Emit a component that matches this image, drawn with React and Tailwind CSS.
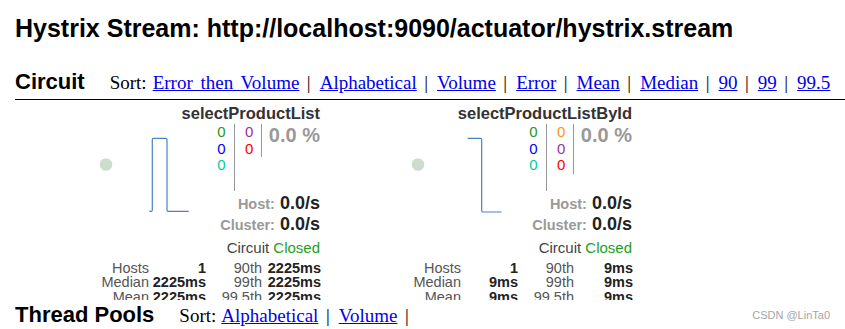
import React from 'react';

const sans = { fontFamily: '"Liberation Sans", Arial, sans-serif' };
const serif = { fontFamily: '"Liberation Serif", "Times New Roman", serif' };

const circuits = [
  {
    name: 'selectProductList',
    col1: [['0', 'text-[#229922]'], ['0', 'text-[#0000ff]'], ['0', 'text-[#00cc99]']],
    col2: [['0', 'text-[#993399]'], ['0', 'text-[#ff0000]']],
    spark: 'M139.3 87.3 L141.3 87.3 Q142.3 87.3 142.3 86 L142.3 15.6 Q142.3 14.3 143.6 14.3 L155.6 14.3 Q157 14.3 157 15.6 L157 86 Q157 87.3 158.3 87.3 L178.7 87.3',
    hosts: '1',
    median: '2225ms',
    mean: '2225ms',
    p90: '2225ms',
    p99: '2225ms',
    p995: '2225ms',
  },
  {
    name: 'selectProductListById',
    col1: [['0', 'text-[#229922]'], ['0', 'text-[#0000ff]'], ['0', 'text-[#00cc99]']],
    col2: [['0', 'text-[#ff9900]'], ['0', 'text-[#993399]'], ['0', 'text-[#ff0000]']],
    spark: 'M145.7 14.3 L158.4 14.3 Q159.7 14.3 159.7 15.6 L159.7 86.7 Q159.7 88 161 88 L179.7 88',
    hosts: '1',
    median: '9ms',
    mean: '9ms',
    p90: '9ms',
    p99: '9ms',
    p995: '9ms',
  },
];

const Sep = () => <span className="pl-[7.5px] pr-[9px] text-black">|</span>;

const Link = ({ children }) => (
  <a href="#" className="text-[#0000ee] underline">
    {children}
  </a>
);

const CircuitCard = ({ c }) => (
  <div className="w-[312px] h-[200px] overflow-hidden flex flex-col pt-[4px]" style={sans}>
    <div className="text-right pr-[2px] text-[16.5px] leading-[18px] font-bold text-[#333]">{c.name}</div>
    <div className="flex mt-[2px]">
      <svg width="190" height="135" className="shrink-0">
        <circle cx="96" cy="40.5" r="6.3" fill="#cddccd" />
        <path d={c.spark} fill="none" stroke="#4a83c4" strokeWidth="1.2" />
      </svg>
      <div className="flex-1 flex flex-col items-end pr-[2px]">
        <div className="flex items-start text-[15px] leading-[16.7px]">
          <div className="h-[67px] pr-[8px] border-r border-[#999] flex flex-col">
            {c.col1.map(([v, cls], i) => (
              <span key={i} className={cls}>{v}</span>
            ))}
          </div>
          <div className="pl-[10.5px] pr-[8px] border-r border-[#999] flex flex-col">
            {c.col2.map(([v, cls], i) => (
              <span key={i} className={cls}>{v}</span>
            ))}
          </div>
          <div className="pl-[6.5px] text-[20px] leading-[22px] font-bold text-[#999]">0.0 %</div>
        </div>
        <div className="mt-[2px] text-[18px] leading-[21px] font-bold text-[#222]">
          <span className="text-[14.5px] leading-[14px] text-[#999]">Host:</span>
          <span className="ml-[5px]">0.0/s</span>
        </div>
        <div className="text-[18px] leading-[21px] font-bold text-[#222]">
          <span className="text-[14.5px] leading-[14px] text-[#999]">Cluster:</span>
          <span className="ml-[5px]">0.0/s</span>
        </div>
        <div className="mt-[2px] text-[15px] leading-[22px] text-[#444]">
          Circuit <span className="text-[#22a022]">Closed</span>
        </div>
      </div>
    </div>
    <div className="grid grid-cols-[139px_57px_56px_59px] text-right text-[14.5px] leading-[14.4px] mt-[2px]">
      <div className="text-[#555]">Hosts</div>
      <div className="font-bold text-[#222]">{c.hosts}</div>
      <div className="text-[#555]">90th</div>
      <div className="font-bold text-[#222]">{c.p90}</div>
      <div className="text-[#555]">Median</div>
      <div className="font-bold text-[#222]">{c.median}</div>
      <div className="text-[#555]">99th</div>
      <div className="font-bold text-[#222]">{c.p99}</div>
      <div className="text-[#555]">Mean</div>
      <div className="font-bold text-[#222]">{c.mean}</div>
      <div className="text-[#555]">99.5th</div>
      <div className="font-bold text-[#222]">{c.p995}</div>
    </div>
  </div>
);

export default function App() {
  const sorts = ['Error then Volume', 'Alphabetical', 'Volume', 'Error', 'Mean', 'Median', '90', '99', '99.5'];
  return (
    <div className="relative w-[845px] h-[329px] overflow-hidden bg-white text-black" style={sans}>
      <h1 className="ml-[15px] mt-[13px] text-[25px] leading-[30px] font-bold">
        Hystrix Stream: http://localhost:9090/actuator/hystrix.stream
      </h1>

      {/* Circuit header */}
      <div className="ml-[15px] mt-[26px] h-[31px] border-b border-black flex items-baseline whitespace-nowrap">
        <span className="text-[22px] leading-[26px] font-bold">Circuit</span>
        <div className="ml-[25px] text-[19px] leading-[26px] [word-spacing:3px]" style={serif}>
          Sort:<span className="ml-[6px]" />
          {sorts.map((s, i) => (
            <React.Fragment key={s}>
              {i > 0 && <Sep />}
              <Link>{s}</Link>
            </React.Fragment>
          ))}
        </div>
      </div>

      {/* Circuit monitors */}
      <div className="flex pl-[10px]">
        {circuits.map((c) => (
          <CircuitCard key={c.name} c={c} />
        ))}
      </div>

      {/* Thread pools header */}
      <div className="ml-[15px] mt-[2px] flex items-baseline whitespace-nowrap">
        <span className="text-[22px] leading-[26px] font-bold">Thread Pools</span>
        <div className="ml-[25px] text-[19px] leading-[26px]" style={serif}>
          Sort:<span className="ml-[5px]" />
          <Link>Alphabetical</Link>
          <Sep />
          <Link>Volume</Link>
          <Sep />
        </div>
      </div>

      <div className="absolute right-[15px] top-[309px] text-[11px] leading-[13px] text-[#a5a5a5]">CSDN @LinTa0</div>
    </div>
  );
}
